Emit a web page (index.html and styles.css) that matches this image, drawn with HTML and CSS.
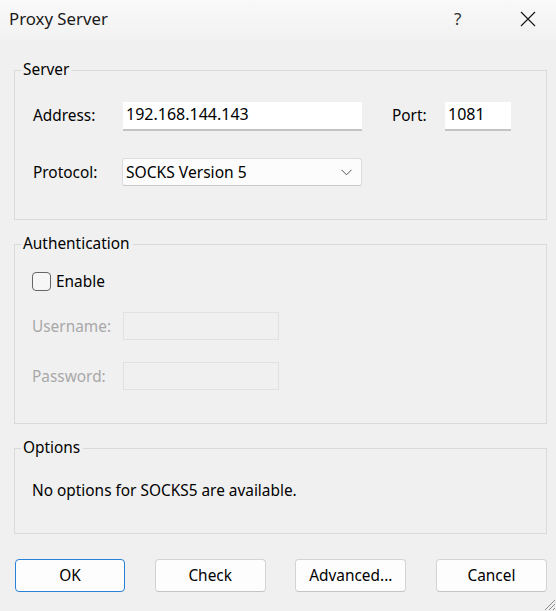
FILE: index.html
```html
<!DOCTYPE html>
<html>
<head>
<meta charset="utf-8">
<title>Proxy Server</title>
<link rel="stylesheet" href="styles.css">
</head>
<body>
<div class="window">
  <div class="titlebar">
    <span class="title">Proxy Server</span>
    <span class="help">?</span>
    <span class="close">
      <svg width="16" height="16" viewBox="0 0 16 16"><path d="M1 1 L15 15 M15 1 L1 15" stroke="#1a1a1a" stroke-width="1.2" fill="none"/></svg>
    </span>
  </div>
  <div class="content">
    <fieldset class="group server">
      <legend>Server</legend>
      <div class="row row-address">
        <label class="lbl">Address:</label>
        <div class="edit addr">192.168.144.143</div>
        <label class="lbl port-lbl">Port:</label>
        <div class="edit port">1081</div>
      </div>
      <div class="row row-protocol">
        <label class="lbl combo-lbl">Protocol:</label>
        <div class="combo">
          <span>SOCKS Version 5</span>
          <svg class="chev" width="11" height="7" viewBox="0 0 11 7"><path d="M0.5 0.8 L5.5 5.8 L10.5 0.8" stroke="#555" stroke-width="1" fill="none"/></svg>
        </div>
      </div>
    </fieldset>

    <fieldset class="group auth">
      <legend>Authentication</legend>
      <div class="row row-enable">
        <span class="check"></span>
        <span class="check-lbl">Enable</span>
      </div>
      <div class="row row-user">
        <label class="lbl disabled">Username:</label>
        <div class="edit dis"></div>
      </div>
      <div class="row row-pass">
        <label class="lbl disabled">Password:</label>
        <div class="edit dis"></div>
      </div>
    </fieldset>

    <fieldset class="group options">
      <legend>Options</legend>
      <div class="row row-note">No options for SOCKS5 are available.</div>
    </fieldset>

    <div class="buttons">
      <button class="btn default">OK</button>
      <button class="btn">Check</button>
      <button class="btn">Advanced...</button>
      <button class="btn">Cancel</button>
    </div>
  </div>
  <svg class="grip" width="14" height="14" viewBox="0 0 14 14"><path d="M13 3 L3 13 M13 7 L7 13 M13 11 L11 13" stroke="#8a8a8a" stroke-width="1" fill="none"/></svg>
</div>
</body>
</html>
```
FILE: styles.css
```css
* { box-sizing: border-box; }
html, body {
  margin: 0;
  padding: 0;
}
body {
  background: #f0f0f0;
  font-family: "Noto Sans", "Open Sans", sans-serif;
  font-size: 15.4px;
  color: #000;
  width: 556px;
  height: 611px;
  overflow: hidden;
}
.window {
  position: relative;
  width: 556px;
  height: 611px;
}
.titlebar {
  height: 40px;
  display: flex;
  align-items: center;
  padding-left: 9px;
  background: linear-gradient(#f9f9f9, #f2f2f2);
}
.title {
  font-size: 16.8px;
  flex: 1;
  color: #1a1a1a;
  padding-bottom: 3px;
}
.help {
  font-size: 17px;
  color: #333;
  width: 66px;
  padding-bottom: 3px;
}
.close {
  width: 36px;
  display: flex;
  align-items: center;
  padding-bottom: 2px;
}
.content {
  padding: 20px 9px 0 14px;
}
.group {
  margin: 0;
  border: 1px solid #dadada;
  padding: 0 0 0 17px;
  min-inline-size: 0;
}
.group legend {
  margin-left: -11px;
  padding: 0 3px 0 2px;
  line-height: 20px;
  height: 20px;
}
.group + .group {
  margin-top: 14px;
}
.row {
  display: flex;
  align-items: center;
}
.lbl {
  width: 91px;
  padding-left: 1px;
  padding-bottom: 3px;
}
.lbl.combo-lbl {
  padding-bottom: 0;
}
.edit {
  height: 29px;
  background: #fff;
  border-bottom: 2px solid #c3c3c3;
  padding: 0 0 3px 3px;
  display: flex;
  align-items: center;
  font-size: 16px;
}
.addr { width: 239px; }
.port-lbl {
  width: 53px;
  margin-left: 30px;
  padding-left: 0;
}
.port { width: 66px; }

.server { padding-top: 22px; padding-bottom: 33px; }
.row-protocol { margin-top: 27px; }
.combo {
  width: 240px;
  height: 28px;
  margin-left: -1px;
  background: #fcfcfc;
  border: 1px solid #dcdcdc;
  border-bottom-color: #c9c9c9;
  border-radius: 3px;
  display: flex;
  align-items: center;
  padding: 0 9px 0 3px;
  font-size: 15.6px;
}
.combo span { flex: 1; }

.auth { padding-top: 17px; padding-bottom: 33px; }
.row-enable { height: 20px; }
.check {
  width: 19px;
  height: 19px;
  border: 1px solid #666;
  border-radius: 4px;
  background: #f6f6f6;
}
.check-lbl { margin-left: 5px; padding-top: 1px; }
.row-user { margin-top: 21px; }
.row-pass { margin-top: 22px; }
.lbl.disabled {
  color: #a8a8a8;
  padding-left: 0;
  padding-bottom: 0;
}
.edit.dis {
  width: 156px;
  height: 28px;
  background: #f0f0f0;
  border: 1px solid #e1e1e1;
}

.options { padding-top: 22px; padding-bottom: 33px; }
.row-note {
  height: 20px;
  padding-left: 0;
}

.buttons {
  display: flex;
  justify-content: space-between;
  margin-top: 25px;
  padding-left: 1px;
}
.btn {
  width: 111px;
  height: 33px;
  font-family: inherit;
  font-size: 15.4px;
  color: #000;
  background: #fdfdfd;
  border: 1px solid #d3d3d3;
  border-bottom-color: #c4c4c4;
  border-radius: 4px;
  padding: 0;
}
.btn.default {
  border: 1.5px solid #2a82d8;
  width: 110px;
}
.grip {
  position: absolute;
  right: 0;
  bottom: 0;
}
```
